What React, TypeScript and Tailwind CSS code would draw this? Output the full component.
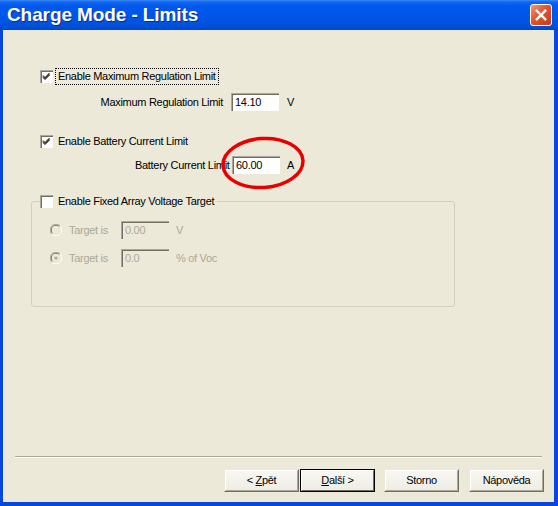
import React from "react";

function CheckBox({ checked }: { checked?: boolean }) {
  return (
    <span className="relative inline-block w-[13px] h-[13px] shrink-0 bg-white border-t border-l border-[#ACA899] border-r-white border-b-white">
      <span className="absolute inset-0 border-t border-l border-[#716F64] border-r-[#F1EFE2] border-b-[#F1EFE2]" />
      {checked && (
        <svg className="absolute left-[1px] top-[1px]" width="9" height="9" viewBox="0 0 9 9">
          <path d="M1 3.5 L3 5.5 L7.5 1 M1 4.5 L3 6.5 L7.5 2 M1 5.5 L3 7.5 L7.5 3" stroke="#000" strokeWidth="1" fill="none" />
        </svg>
      )}
    </span>
  );
}

function Radio({ checked }: { checked?: boolean }) {
  return (
    <svg width="12" height="12" viewBox="0 0 12 12" className="shrink-0">
      <path d="M10.2 1.8 A5.6 5.6 0 0 0 1.8 10.2" stroke="#ACA899" strokeWidth="1" fill="none" />
      <path d="M1.8 10.2 A5.6 5.6 0 0 0 10.2 1.8" stroke="#FFFFFF" strokeWidth="1" fill="none" />
      <path d="M9.4 2.6 A4.5 4.5 0 0 0 2.6 9.4" stroke="#716F64" strokeWidth="1" fill="none" />
      <circle cx="6" cy="6" r="4" fill="#ECE9D8" />
      {checked && <circle cx="6" cy="6" r="1.6" fill="#ACA899" />}
    </svg>
  );
}

function Field({ value, disabled, className = "" }: { value: string; disabled?: boolean; className?: string }) {
  return (
    <div
      className={`relative h-[18px] w-[48px] shrink-0 border-t border-l border-[#ACA899] border-r-white border-b-white ${
        disabled ? "bg-[#ECE9D8] text-[#ACA899]" : "bg-white text-black"
      } ${className}`}
    >
      <div className="absolute inset-0 border-t border-l border-[#716F64] border-r-[#F1EFE2] border-b-[#F1EFE2]" />
      <span className="absolute left-[3px] top-[2px] leading-[13px]">{value}</span>
    </div>
  );
}

function Button({ children, isDefault }: { children: React.ReactNode; isDefault?: boolean }) {
  return (
    <div
      className={`w-[75px] h-[23px] shrink-0 ${
        isDefault ? "border border-black" : "border border-[#ECE9D8] border-r-[#716F64] border-b-[#716F64]"
      }`}
    >
      <div
        className={`h-full flex items-center justify-center bg-[linear-gradient(#F7F6F1,#EEEDE5)] ${
          isDefault
            ? "border border-white border-r-[#716F64] border-b-[#716F64]"
            : "border border-white border-r-[#ACA899] border-b-[#ACA899]"
        }`}
      >
        {children}
      </div>
    </div>
  );
}

export default function App() {
  return (
    <div className="w-[558px] h-[506px] flex flex-col bg-[#0847DC] font-['Liberation_Sans',Arial,sans-serif] text-[11px] leading-[13px] tracking-[-0.3px] text-black overflow-hidden">
      {/* Luna title bar */}
      <div className="h-[30px] shrink-0 flex items-center justify-between pl-[7px] pr-[6px] bg-[linear-gradient(#3A8AF6_0px,#1466F0_2px,#0058EE_6px,#0055E5_20px,#004FD8_27px,#0046C4_30px)]">
        <span className="text-white font-bold text-[19px] leading-[22px] tracking-[-0.1px] [text-shadow:1px_1px_0_#0B2A8F]">
          Charge Mode - Limits
        </span>
        <div className="w-[22px] h-[22px] rounded-[3px] border border-white bg-[linear-gradient(135deg,#F09A7A_0%,#E2542C_45%,#C9391A_100%)] flex items-center justify-center">
          <svg width="12" height="12" viewBox="0 0 12 12">
            <path d="M1.8 1.8 L10.2 10.2 M10.2 1.8 L1.8 10.2" stroke="#FFFFFF" strokeWidth="2.4" strokeLinecap="square" />
          </svg>
        </div>
      </div>

      {/* dialog client area */}
      <div className="relative flex-1 ml-[3px] mr-[4px] mb-[4px] bg-[#ECE9D8] flex flex-col">
        <div className="pt-[40px] pl-[28px]">
          {/* maximum regulation */}
          <div className="pl-[9px] flex items-center h-[13px]">
            <CheckBox checked />
            <span className="ml-[3px] px-[2px] py-[1px] outline outline-1 outline-dotted outline-black whitespace-nowrap">
              Enable Maximum Regulation Limit
            </span>
          </div>
          <div className="mt-[10px] flex items-center h-[18px]">
            <span className="w-[192px] text-right whitespace-nowrap">Maximum Regulation Limit</span>
            <Field value="14.10" className="ml-[8px]" />
            <span className="ml-[8px]">V</span>
          </div>

          {/* battery current */}
          <div className="mt-[24px] pl-[9px] flex items-center h-[13px]">
            <CheckBox checked />
            <span className="ml-[5px] whitespace-nowrap">Enable Battery Current Limit</span>
          </div>
          <div className="mt-[8px] flex items-center h-[18px]">
            <span className="ml-[104px] w-[97px] overflow-hidden whitespace-nowrap">Battery Current Limit</span>
            <Field value="60.00" />
            <span className="ml-[7px]">A</span>
          </div>

          {/* fixed array voltage group */}
          <fieldset className="mt-[21px] w-[424px] h-[112px] border border-[#D0D0BF] rounded-[3px] px-[8px]">
            <legend className="flex items-center h-[13px] pr-[3px]">
              <CheckBox />
              <span className="ml-[5px] whitespace-nowrap">Enable Fixed Array Voltage Target</span>
            </legend>
            <div className="mt-[13px] flex items-center h-[18px] text-[#ACA899]">
              <span className="ml-[10px]"><Radio /></span>
              <span className="ml-[7px] w-[52px] whitespace-nowrap">Target is</span>
              <Field value="0.00" disabled />
              <span className="ml-[7px]">V</span>
            </div>
            <div className="mt-[10px] flex items-center h-[18px] text-[#ACA899]">
              <span className="ml-[10px]"><Radio checked /></span>
              <span className="ml-[7px] w-[52px] whitespace-nowrap">Target is</span>
              <Field value="0.0" disabled />
              <span className="ml-[7px] whitespace-nowrap">% of Voc</span>
            </div>
          </fieldset>
        </div>

        <div className="flex-1" />

        {/* etched separator */}
        <div className="mx-[12px] h-[2px] border-t border-[#ACA899] border-b border-b-white" />

        {/* wizard buttons */}
        <div className="mt-[11px] mb-[10px] pr-[10px] flex justify-end">
          <Button>
            <span>&lt; <span className="underline">Z</span>pět</span>
          </Button>
          <div className="ml-[1px]">
            <Button isDefault>
              <span><span className="underline">D</span>alší &gt;</span>
            </Button>
          </div>
          <div className="ml-[9px]">
            <Button>Storno</Button>
          </div>
          <div className="ml-[10px]">
            <Button>Nápověda</Button>
          </div>
        </div>

        {/* red annotation ring over the current limit field */}
        <svg className="absolute left-[216px] top-[105px] pointer-events-none" width="88" height="56" viewBox="0 0 88 56">
          <ellipse cx="44" cy="28" rx="40" ry="24.5" transform="rotate(-4 44 28)" stroke="#E80000" strokeWidth="3.5" fill="none" />
        </svg>
      </div>
    </div>
  );
}
